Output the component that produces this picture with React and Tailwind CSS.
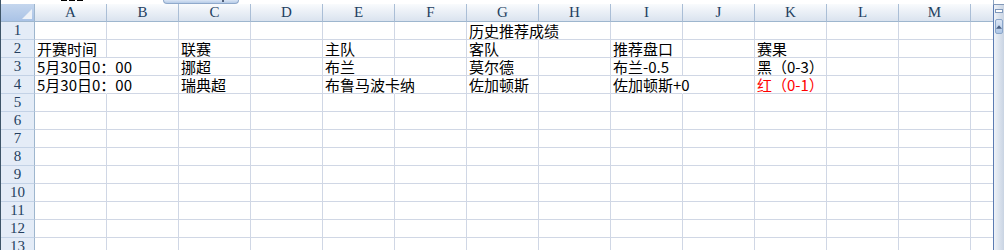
import React from 'react';

const COLS = ['A', 'B', 'C', 'D', 'E', 'F', 'G', 'H', 'I', 'J', 'K', 'L', 'M'];

// Sheet contents keyed by row number, then column letter.
// `over` marks text that spills into the next column (its right gridline is hidden).
const DATA = {
  1: { G: { t: '历史推荐成绩', over: true } },
  2: {
    A: { t: '开赛时间' },
    C: { t: '联赛' },
    E: { t: '主队' },
    G: { t: '客队' },
    I: { t: '推荐盘口' },
    K: { t: '赛果' },
  },
  3: {
    A: { t: '5月30日0：00', over: true },
    C: { t: '挪超' },
    E: { t: '布兰' },
    G: { t: '莫尔德' },
    I: { t: '布兰-0.5' },
    K: { t: '黑（0-3）' },
  },
  4: {
    A: { t: '5月30日0：00', over: true },
    C: { t: '瑞典超' },
    E: { t: '布鲁马波卡纳', over: true },
    G: { t: '佐加顿斯' },
    I: { t: '佐加顿斯+0', over: true },
    K: { t: '红（0-1）', red: true },
  },
};

const ROWS = Array.from({ length: 13 }, (_, i) => i + 1);

function CornerCell() {
  return (
    <div className="w-[34px] h-[18px] shrink-0 border-r border-r-[#9eb6ce] border-b border-b-[#9eb6ce] bg-gradient-to-b from-[#c4d6ee] to-[#aac3e6] flex items-end justify-end p-[2px]">
      <svg width="10" height="10" viewBox="0 0 10 10">
        <polygon points="10,0 10,10 0,10" fill="#eef2f8" />
      </svg>
    </div>
  );
}

function ColHeader({ label }) {
  return (
    <div className="w-[72px] h-[18px] shrink-0 border-r border-r-[#aabed6] border-b border-b-[#9eb6ce] bg-gradient-to-b from-[#f9fbfd] to-[#dae3ef] flex items-center justify-center text-[15px] leading-none text-[#243f60] font-['Liberation_Serif',serif]">
      {label}
    </div>
  );
}

function RowHeader({ n }) {
  return (
    <div className="w-[34px] h-[18px] shrink-0 bg-[#e4ecf7] border-r border-r-[#9eb6ce] border-b border-b-[#c3d2e6] flex items-center justify-center text-[15px] leading-none text-[#243f60] font-['Liberation_Serif',serif]">
      {n}
    </div>
  );
}

function Cell({ cell }) {
  const over = cell && cell.over;
  return (
    <div
      className={`w-[72px] h-[18px] shrink-0 border-b border-b-[#d0d7e5] border-r ${
        over ? 'border-r-transparent' : 'border-r-[#d0d7e5]'
      } flex items-end pl-[2px] whitespace-nowrap text-[15px] leading-[17px] font-['Noto_Sans_CJK_SC',sans-serif] ${
        cell && cell.red ? 'text-[#ff0000]' : 'text-black'
      }`}
    >
      {cell ? cell.t : null}
    </div>
  );
}

function Scrollbar() {
  return (
    <div className="w-[11px] shrink-0 flex flex-col">
      <div className="h-[4px] bg-white border-l border-l-[#8da5c3]" />
      <div className="h-[1px] bg-[#8198b8]" />
      <div className="flex-1 flex flex-col border-l border-l-[#5b7bb2] bg-gradient-to-r from-[#eef2f8] to-[#c9d4e3]">
        <div className="h-[4px]" />
        <div className="h-[4px] mx-[1px] bg-white border border-[#7f98bb]" />
        <div className="h-[6px]" />
        <div className="h-[15px] mx-[1px] rounded-[2px] border border-[#8ba6ca] bg-gradient-to-b from-[#dbe6f5] to-[#aec6e6] flex items-center justify-center">
          <svg width="7" height="4" viewBox="0 0 7 4">
            <polygon points="3.5,0 7,4 0,4" fill="#4a5f83" />
          </svg>
        </div>
      </div>
    </div>
  );
}

export default function App() {
  return (
    <div className="w-[1004px] h-[250px] overflow-hidden bg-white flex">
      <div className="w-[993px] shrink-0 flex flex-col border-l border-l-[#3e5568]">
        {/* edge of the formula bar above the grid */}
        <div className="h-[4px] flex items-start bg-white">
          <div className="ml-[60px] w-[6px] h-[1px] bg-black" />
          <div className="ml-[2px] w-[6px] h-[1px] bg-black" />
          <div className="ml-[2px] w-[6px] h-[1px] bg-black" />
          <div className="ml-[80px] w-[76px] h-[4px] rounded-b-[6px] border border-t-0 border-[#8fa9cb] bg-gradient-to-b from-[#d9e5f4] to-[#b7cce8] flex justify-end pr-[14px]">
            <div className="w-[2px] h-[2px] bg-[#51607a]" />
          </div>
        </div>
        <div className="h-[1px] bg-[#8198b8]" />
        <div className="h-[4px] bg-[#e6ecf4]" />

        {/* column headers */}
        <div className="flex">
          <CornerCell />
          {COLS.map((c) => (
            <ColHeader key={c} label={c} />
          ))}
          <div className="w-[22px] h-[18px] shrink-0 border-b border-b-[#9eb6ce] bg-gradient-to-b from-[#f9fbfd] to-[#dae3ef]" />
        </div>

        {/* worksheet rows */}
        {ROWS.map((r) => (
          <div key={r} className="flex">
            <RowHeader n={r} />
            {COLS.map((c) => (
              <Cell key={c} cell={DATA[r] ? DATA[r][c] : undefined} />
            ))}
            <div className="w-[22px] h-[18px] shrink-0 border-b border-b-[#d0d7e5]" />
          </div>
        ))}
      </div>
      <Scrollbar />
    </div>
  );
}
